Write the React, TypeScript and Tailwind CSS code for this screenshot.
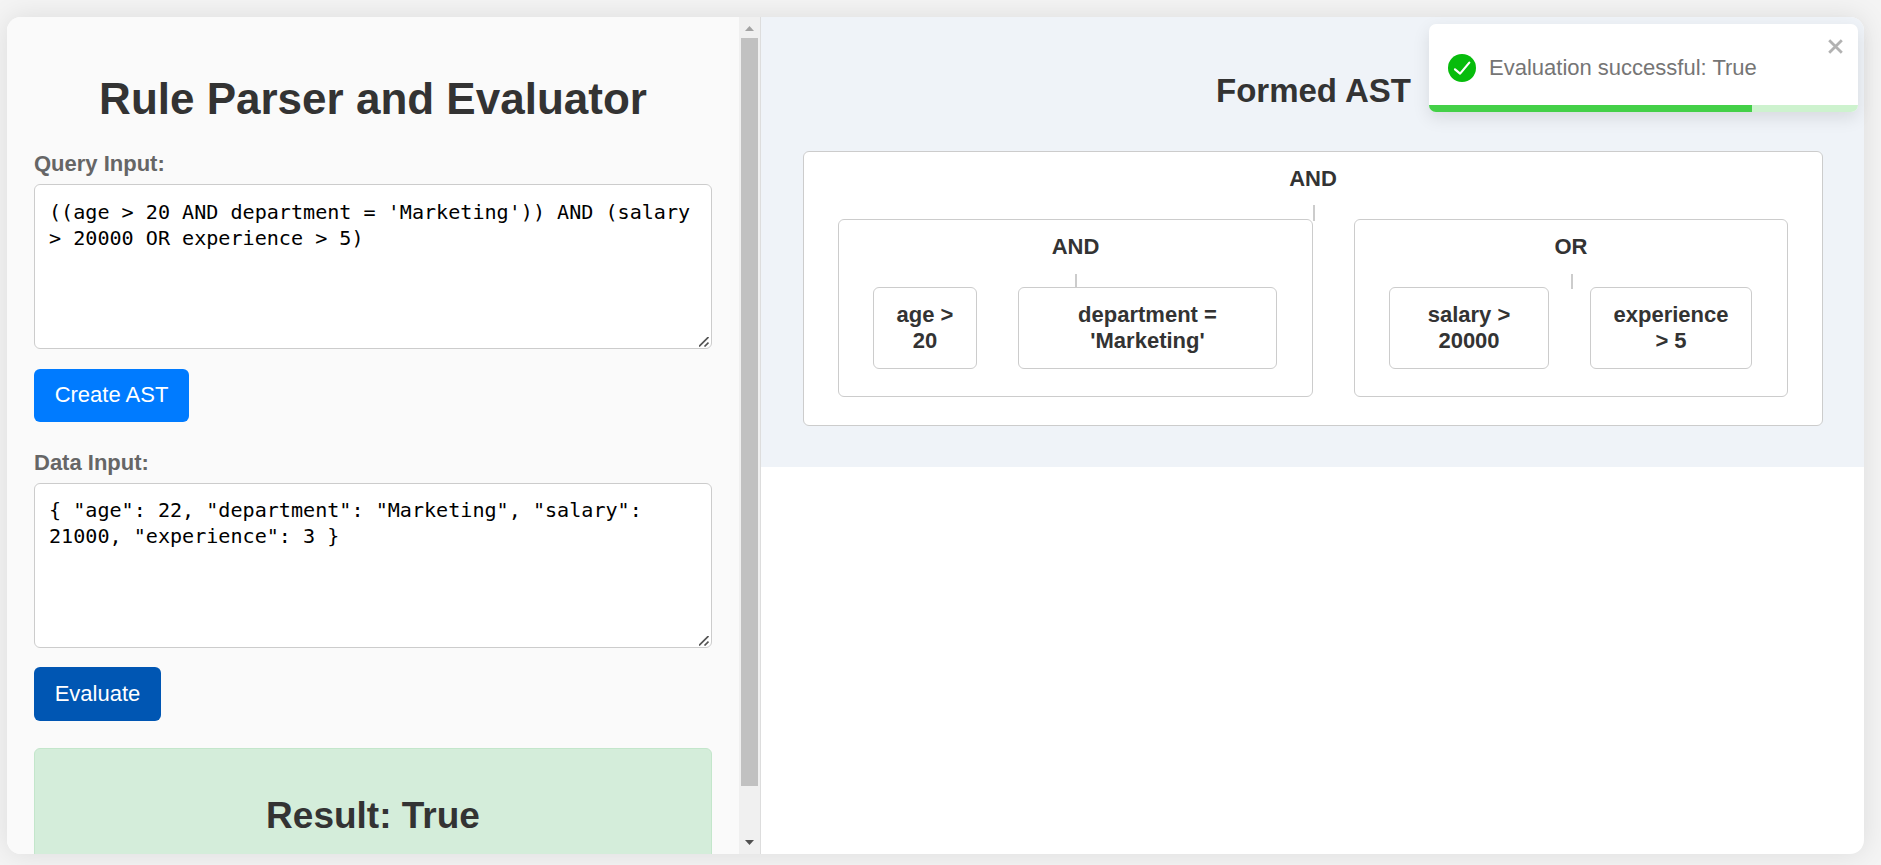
import type { ReactNode } from "react";

function Grip() {
  return (
    <svg className="pointer-events-none absolute right-[3px] bottom-[2px]" width="10" height="10" viewBox="0 0 10 10" fill="none" stroke="#555" strokeWidth="1.7">
      <path d="M0 9.5 9.5 0M5.5 9.5 9.5 5.5" />
    </svg>
  );
}

function Field({ label, value, pad }: { label: string; value: string; pad: string }) {
  return (
    <div>
      <label className="block h-[33px] text-[22px] leading-[25px] font-bold text-[#666]">{label}</label>
      <div className="relative h-[165px]">
        <textarea
          className={`block h-[165px] w-full resize-none overflow-hidden rounded-[6px] border border-[#ccc] bg-white pr-2 pl-[14px] font-['DejaVu_Sans_Mono','Liberation_Mono',monospace] text-[20.1px] leading-[26px] text-black outline-none ${pad}`}
          defaultValue={value}
          spellCheck={false}
        />
        <Grip />
      </div>
    </div>
  );
}

function ScrollBar() {
  return (
    <div className="flex w-[21px] shrink-0 flex-col items-center bg-[#f0f0f0]">
      <svg className="shrink-0" width="21" height="21" viewBox="0 0 21 21">
        <path d="M6 14 10.5 9 15 14Z" fill="#a3a3a3" />
      </svg>
      <div className="h-[748px] w-[17px] bg-[#c1c1c1]" />
      <svg className="mt-auto shrink-0" width="21" height="21" viewBox="0 0 21 21">
        <path d="M6 7 15 7 10.5 12Z" fill="#505050" />
      </svg>
    </div>
  );
}

function Branch({ label, className, tick, children }: { label: string; className: string; tick: string; children: ReactNode }) {
  return (
    <div className={`relative rounded-[6px] border border-[#ccc] bg-white pt-[14px] ${className}`}>
      <div className="text-center leading-[25px]">{label}</div>
      <div className={`absolute w-[2px] bg-[#ccc] ${tick}`} />
      <div className="relative mt-7 flex pl-[34px]">{children}</div>
    </div>
  );
}

function Leaf({ top, bottom, className }: { top: string; bottom: string; className: string }) {
  return (
    <div className={`h-[82px] shrink-0 rounded-[6px] border border-[#ccc] bg-white pt-[14px] text-center leading-[26px] ${className}`}>
      {top}
      <br />
      {bottom}
    </div>
  );
}

function Toast() {
  return (
    <div className="absolute top-6 left-[1429px] h-[88px] w-[429px] overflow-hidden rounded-[7px] bg-white shadow-[0_6px_17px_rgba(0,0,0,0.1)]">
      <div className="flex h-[81px] items-start pt-[29.5px] pl-[19px]">
        <svg width="28" height="28" viewBox="0 0 28 28" fill="none">
          <circle cx="14" cy="14" r="14" fill="#07bc0c" />
          <path d="M7 15.3 12.1 19.6 21.3 8.6" stroke="#fff" strokeWidth="2.2" strokeLinecap="round" strokeLinejoin="round" />
        </svg>
        <span className="ml-[13px] text-[22px] leading-[27px] text-[#757575]">Evaluation successful: True</span>
      </div>
      <svg className="absolute top-[15px] right-[15px]" width="15" height="15" viewBox="0 0 15 15" stroke="#b2b2b2" strokeWidth="2.8">
        <path d="M1.2 1.2 13.8 13.8M13.8 1.2 1.2 13.8" />
      </svg>
      <div className="flex h-[7px] bg-[#cdf2ce]">
        <div className="w-[323px] bg-[#44d048]" />
      </div>
    </div>
  );
}

export default function App() {
  return (
    <div className="relative h-[865px] w-full overflow-hidden bg-[#f4f4f4] pt-[17px] pl-[7px] font-['Liberation_Sans',Arial,sans-serif] text-[#333]">
      <main className="flex h-[837px] w-[1857px] overflow-hidden rounded-[14px] bg-white shadow-[0_0_28px_rgba(0,0,0,0.1)]">
        <section className="flex w-[754px] shrink-0 border-r border-[#ddd] bg-[#fafafa]">
          <div className="w-[732px] overflow-hidden px-[27px] pt-[56px]">
            <h1 className="mb-[27px] h-[51px] text-center text-[44px] leading-[51px] font-bold">Rule Parser and Evaluator</h1>
            <Field label="Query Input:" pad="pt-[14px]" value={"((age > 20 AND department = 'Marketing')) AND (salary\n> 20000 OR experience > 5)"} />
            <button className="mt-5 mb-[28px] block h-[53px] w-[155px] rounded-[6px] bg-[#007bff] pb-[2px] text-[22px] text-white">Create AST</button>
            <Field label="Data Input:" pad="pt-[13px]" value={'{ "age": 22, "department": "Marketing", "salary":\n21000, "experience": 3 }'} />
            <button className="mt-[19px] mb-[27px] block h-[54px] w-[127px] rounded-[6px] bg-[#0056b3] pb-[2px] text-[22px] text-white">Evaluate</button>
            <div className="h-[160px] rounded-[6px] border border-[#c3e6cb] bg-[#d4edda] pt-[46px] text-center">
              <h2 className="text-[37px] leading-[42px] font-bold">Result: True</h2>
            </div>
          </div>
          <ScrollBar />
        </section>
        <section className="min-w-0 flex-1">
          <div className="h-[450px] bg-[#eff3f8] px-[42px] pt-[55px]">
            <h2 className="mb-[41px] pl-[2px] text-center text-[33px] leading-[38px] font-bold">Formed AST</h2>
            <div className="text-[22px] font-bold">
              <Branch label="AND" className="h-[275px] w-[1020px]" tick="left-[509px] top-[53px] h-4">
                <Branch label="AND" className="mr-[41px] h-[178px] w-[475px] shrink-0" tick="left-[236px] top-[54px] h-[15px]">
                  <Leaf top="age >" bottom="20" className="mr-[41px] w-[104px]" />
                  <Leaf top="department =" bottom="'Marketing'" className="w-[259px]" />
                </Branch>
                <Branch label="OR" className="h-[178px] w-[434px] shrink-0" tick="left-[216px] top-[54px] h-[15px]">
                  <Leaf top="salary >" bottom="20000" className="mr-[41px] w-[160px]" />
                  <Leaf top="experience" bottom="> 5" className="w-[162px]" />
                </Branch>
              </Branch>
            </div>
          </div>
        </section>
      </main>
      <Toast />
    </div>
  );
}
